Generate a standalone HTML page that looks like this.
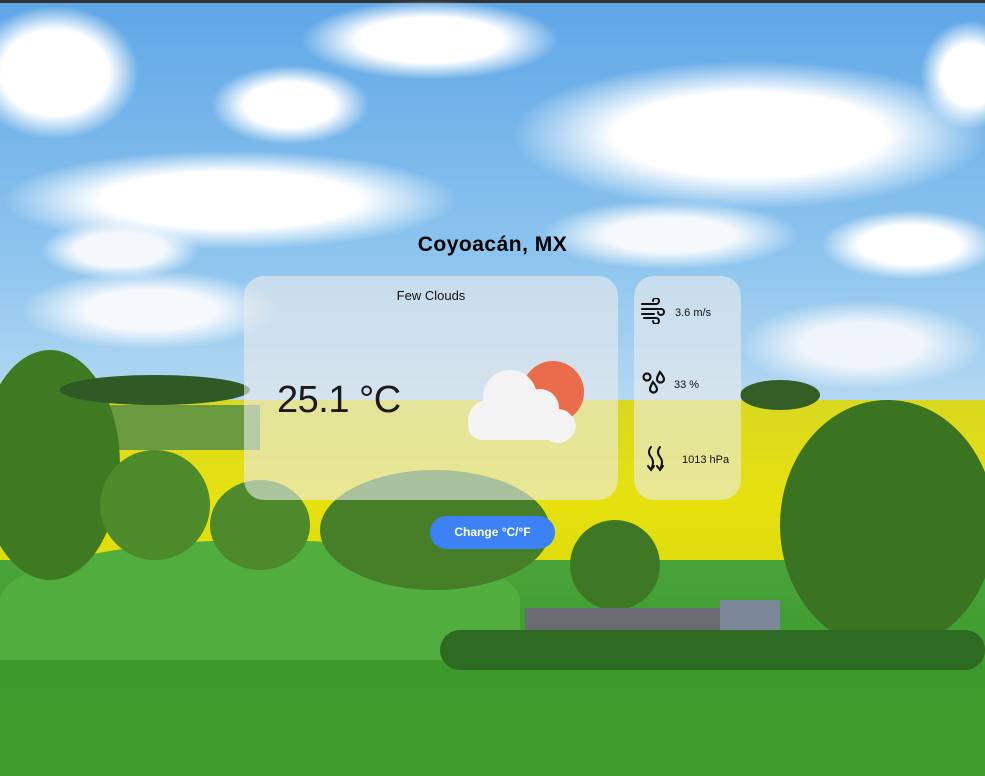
<!DOCTYPE html>
<html><head><meta charset="utf-8"><style>
*{margin:0;padding:0;box-sizing:border-box}
body{width:985px;height:776px;overflow:hidden;position:relative;font-family:"Liberation Sans",sans-serif;background:#6fb0e8}
.bg{position:absolute;inset:0}
.l{position:absolute}
.card{position:absolute;background:rgba(235,235,235,0.6);border-radius:20px}
</style></head><body>
<div class="bg">
 <div class="l" style="left:0;top:0;width:985px;height:420px;background:linear-gradient(#5fa6e6,#8cc4ee 60%,#b8daf2)"></div>
 <div class="l" style="left:0;top:0;width:985px;height:3px;background:#333"></div>
 <div class="l" style="left:-30px;top:5px;width:170px;height:135px;border-radius:50%;background:radial-gradient(#fff 45%,rgba(255,255,255,0) 70%)"></div>
 <div class="l" style="left:0px;top:150px;width:460px;height:100px;border-radius:50%;background:radial-gradient(#fff 40%,rgba(255,255,255,0) 70%)"></div>
 <div class="l" style="left:40px;top:220px;width:160px;height:60px;border-radius:50%;background:radial-gradient(#f4f8fc 40%,rgba(255,255,255,0) 70%)"></div>
 <div class="l" style="left:210px;top:65px;width:160px;height:80px;border-radius:50%;background:radial-gradient(#fff 40%,rgba(255,255,255,0) 70%)"></div>
 <div class="l" style="left:300px;top:0px;width:260px;height:80px;border-radius:50%;background:radial-gradient(#fff 40%,rgba(255,255,255,0) 70%)"></div>
 <div class="l" style="left:510px;top:60px;width:480px;height:150px;border-radius:50%;background:radial-gradient(#fff 40%,rgba(255,255,255,0) 70%)"></div>
 <div class="l" style="left:920px;top:20px;width:100px;height:110px;border-radius:50%;background:radial-gradient(#fff 40%,rgba(255,255,255,0) 70%)"></div>
 <div class="l" style="left:820px;top:210px;width:180px;height:70px;border-radius:50%;background:radial-gradient(#fff 40%,rgba(255,255,255,0) 70%)"></div>
 <div class="l" style="left:540px;top:200px;width:260px;height:70px;border-radius:50%;background:radial-gradient(#f6f9fc 35%,rgba(255,255,255,0) 70%)"></div>
 <div class="l" style="left:20px;top:270px;width:260px;height:80px;border-radius:50%;background:radial-gradient(#f6f9fc 35%,rgba(255,255,255,0) 70%)"></div>
 <div class="l" style="left:740px;top:300px;width:245px;height:90px;border-radius:50%;background:radial-gradient(#eef4fa 35%,rgba(255,255,255,0) 70%)"></div>
 <div class="l" style="left:0;top:400px;width:985px;height:200px;background:linear-gradient(#d8d820,#e6e10e 50%,#dcd80c)"></div>
 <div class="l" style="left:100px;top:405px;width:160px;height:45px;background:#6a9a40"></div>
 <div class="l" style="left:0;top:560px;width:985px;height:216px;background:linear-gradient(#4aa43a,#3c9a2c 50%,#3f9c2c)"></div>
 <div class="l" style="left:0;top:540px;width:520px;height:120px;border-radius:50% 50% 0 0;background:#52ad3f"></div>
 <div class="l" style="left:-20px;top:350px;width:140px;height:230px;border-radius:50%;background:#3d7a22"></div>
 <div class="l" style="left:60px;top:375px;width:190px;height:30px;border-radius:50%;background:#2f5a25"></div>
 <div class="l" style="left:100px;top:450px;width:110px;height:110px;border-radius:50%;background:#4c8a2a"></div>
 <div class="l" style="left:210px;top:480px;width:100px;height:90px;border-radius:50%;background:#4e8a2c"></div>
 <div class="l" style="left:320px;top:470px;width:230px;height:120px;border-radius:50%;background:#467f28"></div>
 <div class="l" style="left:780px;top:400px;width:215px;height:250px;border-radius:50%;background:#3a7420"></div>
 <div class="l" style="left:740px;top:380px;width:80px;height:30px;border-radius:50%;background:#335e26"></div>
 <div class="l" style="left:570px;top:520px;width:90px;height:90px;border-radius:50%;background:#3f7825"></div>
 <div class="l" style="left:525px;top:608px;width:200px;height:45px;background:#6a6c72"></div>
 <div class="l" style="left:720px;top:600px;width:60px;height:55px;background:#7a8899"></div>
 <div class="l" style="left:440px;top:630px;width:545px;height:40px;border-radius:20px;background:#2f6a22"></div>
</div>

<div style="position:absolute;left:0;width:985px;top:233px;text-align:center;font-weight:bold;font-size:21px;letter-spacing:0.5px;color:#000">Coyoacán, MX</div>

<div class="card" style="left:244px;top:276px;width:374px;height:224px">
 <div style="position:absolute;top:12px;width:100%;text-align:center;font-size:13px;color:#111">Few Clouds</div>
 <div style="position:absolute;left:33px;top:103px;font-size:38px;color:#1a1a1a;letter-spacing:-0.5px">25.1 °C</div>
 <svg style="position:absolute;left:0;top:0" width="374" height="224">
  <circle cx="309" cy="116" r="31" fill="#ea6c4a"/>
  <g fill="#f3f3f3">
   <circle cx="266" cy="121" r="27"/>
   <circle cx="296" cy="132" r="19"/>
   <circle cx="244" cy="144" r="20"/>
   <circle cx="314" cy="150" r="17"/>
   <rect x="224" y="136" width="108" height="28" rx="14"/>
  </g>
 </svg>
</div>

<div class="card" style="left:634px;top:276px;width:107px;height:224px">
 <svg style="position:absolute;left:7px;top:22px" width="24" height="26" viewBox="0 0 24 26" fill="none" stroke="#111" stroke-width="2" stroke-linecap="round">
  <path d="M1 6H15a3 3 0 1 0-3-3"/><path d="M1 11H20a3 3 0 1 1-3 3"/><path d="M1 16H13"/><path d="M3 20H15a3 3 0 1 1-3 3"/>
 </svg>
 <div style="position:absolute;left:41px;top:31px;font-size:11px;color:#111">3.6 m/s</div>
 <svg style="position:absolute;left:8px;top:94px" width="24" height="26" viewBox="0 0 24 26" fill="none" stroke="#111" stroke-width="2.2">
  <circle cx="5" cy="7" r="3.5"/><path d="M18 2 Q22 7 22 9 a3.5 3.5 0 0 1-7 0 Q15 7 18 2z"/><path d="M11 12 Q15 17 15 19 a3.5 3.5 0 0 1-7 0 Q8 17 11 12z"/>
 </svg>
 <div style="position:absolute;left:40px;top:103px;font-size:11px;color:#111">33 %</div>
 <svg style="position:absolute;left:12px;top:169px" width="24" height="28" viewBox="0 0 24 28" fill="none" stroke="#111" stroke-width="2" stroke-linecap="round">
  <path d="M5 2 Q1 7 5 12 Q9 17 5 24"/><path d="M2 21 L5 25 L8 21"/><path d="M14 2 Q10 7 14 12 Q18 17 14 24"/><path d="M11 21 L14 25 L17 21"/>
 </svg>
 <div style="position:absolute;left:48px;top:178px;font-size:11px;color:#111">1013 hPa</div>
</div>

<div style="position:absolute;left:430px;top:516px;width:125px;height:33px;border-radius:17px;background:#3d82f5;color:#fff;font-weight:bold;font-size:12px;text-align:center;line-height:33px">Change °C/°F</div>
</body></html>
